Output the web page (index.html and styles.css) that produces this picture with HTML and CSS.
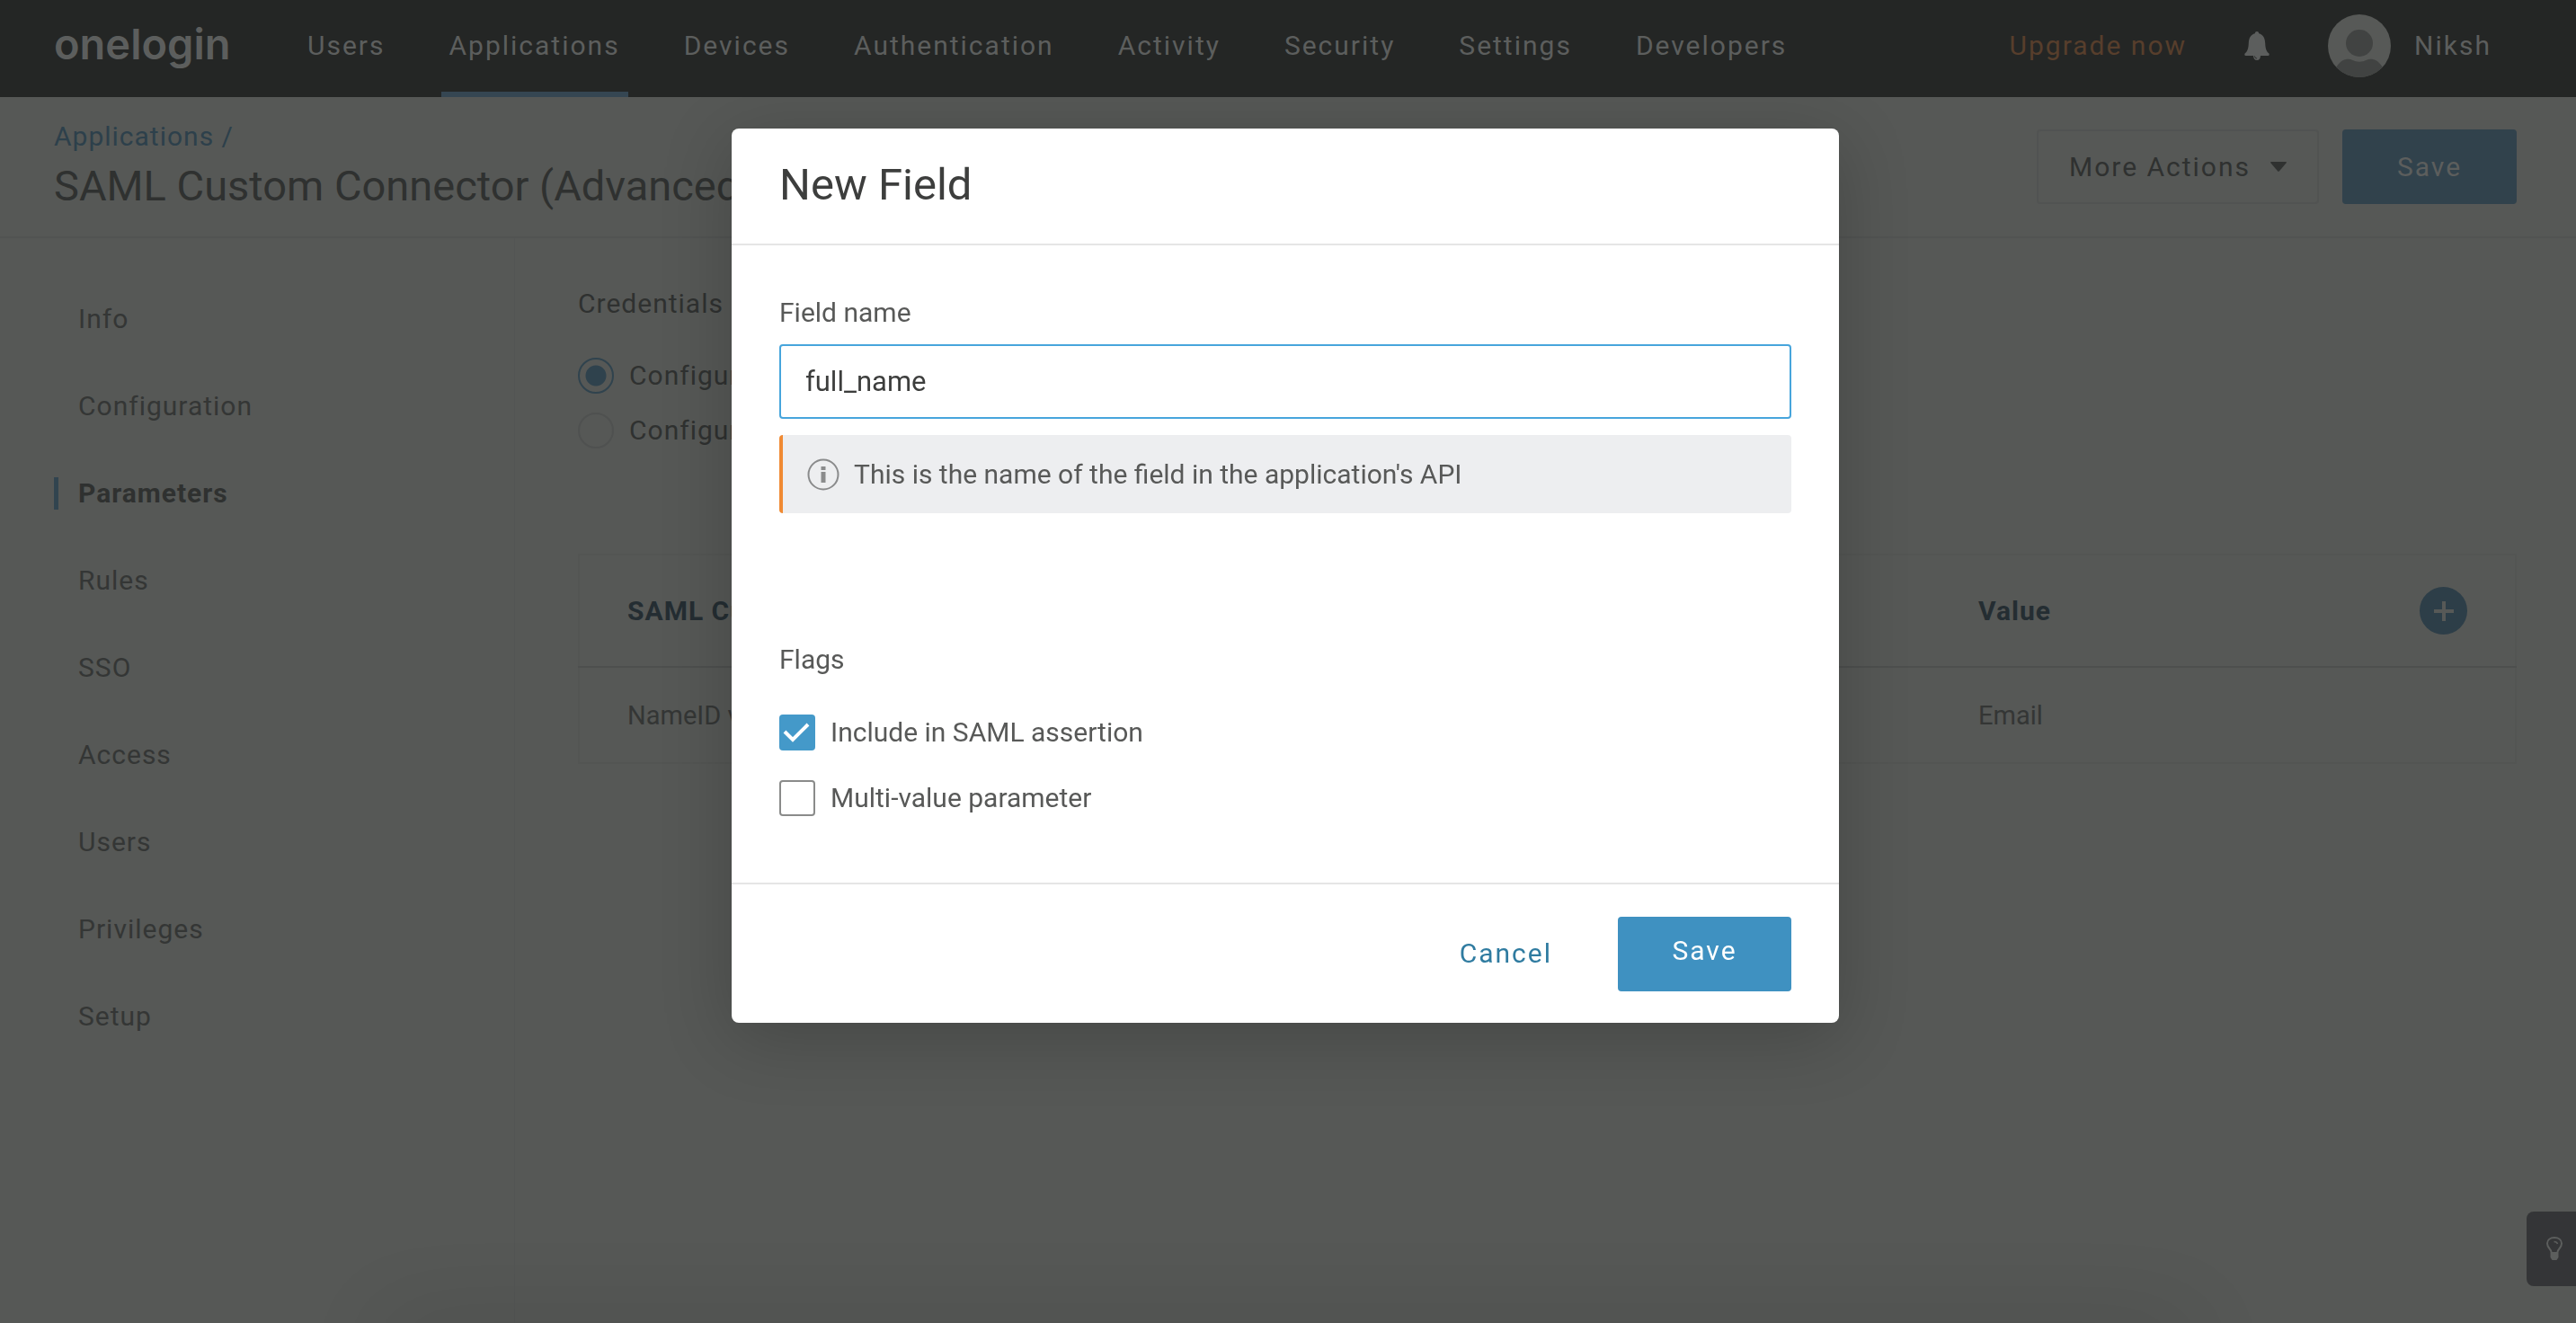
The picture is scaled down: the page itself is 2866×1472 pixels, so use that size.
FILE: index.html
```
<!DOCTYPE html>
<html lang="en">
<head>
<meta charset="utf-8">
<title>SAML Custom Connector (Advanced) | OneLogin</title>
<link rel="stylesheet" href="styles.css">
</head>
<body>
<header class="topbar">
  <a class="logo" href="#">onelogin</a>
  <nav class="mainnav" aria-label="Main">
    <a href="#">Users</a>
    <a class="active" href="#">Applications</a>
    <a href="#">Devices</a>
    <a href="#">Authentication</a>
    <a href="#">Activity</a>
    <a href="#">Security</a>
    <a href="#">Settings</a>
    <a href="#">Developers</a>
  </nav>
  <div class="account">
    <a class="upgrade" href="#">Upgrade now</a>
    <button class="bell" type="button" aria-label="Notifications">
      <svg width="30" height="34" viewBox="0 0 30 34"><path d="M15 1c1.300 0 2 .8 2.200 2.200C22 4.500 24 8.500 24.200 14c.2 6 1.300 9 4 11.300.8.7.7 2.700-.6 2.700H2.400c-1.300 0-1.400-2-.6-2.700 2.700-2.300 3.800-5.300 4-11.300C6 8.500 8 4.500 12.800 3.200 13 1.800 13.700 1 15 1z" fill="currentColor"/><path d="M11 28h8c0 3-1.600 5-4 5s-4-2-4-5z" fill="currentColor"/><path d="M12.500 28.500c.2 1.500 1 2.300 2.300 2.500" fill="none" stroke="#242625" stroke-width="1"/></svg>
    </button>
    <a class="profile" href="#">
      <svg width="70" height="70" viewBox="0 0 70 70"><defs><clipPath id="face"><circle cx="35" cy="35" r="35"/></clipPath></defs><circle cx="35" cy="35" r="35" fill="#575957"/><g clip-path="url(#face)" fill="#414342"><circle cx="35" cy="32" r="15"/><path d="M8 61c3-6 7-10 12-11 3-.7 5-.4 7 .8 5 2.600 11 2.600 16 0 2-1.200 4-1.500 7-.8 5 1 9 5 12 11v12H8z"/></g></svg>
      <span>Niksh</span>
    </a>
  </div>
</header>

<section class="pagehead">
  <div>
    <a class="crumb" href="#">Applications /</a>
    <h1>SAML Custom Connector (Advanced)</h1>
  </div>
  <div class="actions">
    <button class="btn outline" type="button">More Actions
      <svg width="18" height="11" viewBox="0 0 18 11"><path d="M1 0h16q1.500 0 .5 1.400L10 10.200q-1 1-2 0L.5 1.400Q-.5 0 1 0z" fill="currentColor"/></svg>
    </button>
    <button class="btn primary" type="button">Save</button>
  </div>
</section>

<div class="layout">
  <nav class="sidenav" aria-label="Application">
    <a href="#">Info</a>
    <a href="#">Configuration</a>
    <a class="active" href="#">Parameters</a>
    <a href="#">Rules</a>
    <a href="#">SSO</a>
    <a href="#">Access</a>
    <a href="#">Users</a>
    <a href="#">Privileges</a>
    <a href="#">Setup</a>
  </nav>
  <main class="content">
    <fieldset class="credentials">
      <legend>Credentials are</legend>
      <label><input type="radio" name="cred" checked>Configured by admin</label>
      <label><input type="radio" name="cred">Configured by admins and shared by all users</label>
    </fieldset>
    <table class="params">
      <thead>
        <tr><th class="name">SAML Custom Connector (Advanced) Field</th><th>Value</th><th class="add"><button type="button" aria-label="Add parameter"><svg width="22" height="22" viewBox="0 0 22 22"><path d="M11 0v22M0 11h22" stroke="currentColor" stroke-width="4"/></svg></button></th></tr>
      </thead>
      <tbody>
        <tr><td>NameID value</td><td>Email</td><td></td></tr>
      </tbody>
    </table>
  </main>
</div>

<div class="tray"></div>
<button class="hint" type="button" aria-label="Tips">
  <svg width="18" height="27" viewBox="0 0 18 27"><path d="M5.500 17c0-3-4.500-4.500-4.500-9.500C1 3.500 4.500 1 9 1s8 2.500 8 6.500c0 5-4.500 6.500-4.500 9.500" fill="none" stroke="currentColor" stroke-width="2"/><path d="M8.500 5.500c2 0 3.500.8 4 2.500" fill="none" stroke="currentColor" stroke-width="1.500"/><path d="M4.500 17h9v6l-2 3h-5l-2-3z" fill="currentColor"/></svg>
</button>

<div class="overlay">
  <form class="modal" role="dialog" aria-labelledby="dialog-title">
    <h2 id="dialog-title">New Field</h2>
    <div class="modal-body">
      <label class="caption" for="field-name">Field name</label>
      <input class="textbox" id="field-name" type="text" value="full_name">
      <p class="note">
        <svg width="36" height="36" viewBox="0 0 36 36"><circle cx="18" cy="18" r="16.500" fill="none" stroke="currentColor" stroke-width="2"/><path d="M15.500 9h5v4h-5zM15.500 15h5v12h-5z" fill="currentColor"/></svg>
        This is the name of the field in the application's API
      </p>
      <fieldset class="flags">
        <legend class="caption">Flags</legend>
        <label><span class="tick"><input type="checkbox" checked><svg viewBox="0 0 40 40"><path d="M6 19l9 9 17-17" fill="none" stroke="#fff" stroke-width="4"/></svg></span>Include in SAML assertion</label>
        <label><span class="tick"><input type="checkbox"></span>Multi-value parameter</label>
      </fieldset>
    </div>
    <div class="modal-foot">
      <button class="cancel" type="button">Cancel</button>
      <button class="btn save" type="button">Save</button>
    </div>
  </form>
</div>
</body>
</html>
```
FILE: styles.css
```
* { box-sizing: border-box; }
body {
  margin: 0;
  min-height: 100vh;
  display: flex;
  flex-direction: column;
  background: #565856;
  color: #343635;
  font: 30px/40px Roboto, "Liberation Sans", sans-serif;
}
a { color: inherit; text-decoration: none; }
button { font: inherit; color: inherit; border: 0; padding: 0; background: none; }
svg { display: block; }
fieldset { border: 0; margin: 0; padding: 0; min-width: 0; }
legend { padding: 0; }

.topbar {
  display: flex;
  align-items: stretch;
  height: 108px;
  padding: 0 94px 0 60px;
  background: #242625;
  color: #5c5e5d;
  letter-spacing: 2px;
}
.logo {
  width: 273px;
  font: 600 47px/98px Inter, sans-serif;
  letter-spacing: normal;
}
.mainnav { display: flex; gap: 53px; }
.mainnav a { padding: 0 9px; line-height: 102px; border-bottom: 6px solid transparent; }
.mainnav .active { border-color: #354652; }
.account { display: flex; align-items: center; margin-left: auto; padding-bottom: 6px; }
.upgrade { color: #573e2c; margin-right: 63px; }
.bell { margin-right: 64px; }
.profile { display: flex; align-items: center; gap: 26px; }

.pagehead {
  display: flex;
  justify-content: space-between;
  align-items: flex-start;
  height: 157px;
  padding: 24px 66px 0 60px;
  border-bottom: 2px solid #515352;
}
.crumb { display: block; line-height: 40px; color: #2d404b; letter-spacing: 1px; }
h1 { margin: 5px 0 0; font-size: 47px; line-height: 60px; font-weight: 400; color: #2f3130; }
.actions { display: flex; gap: 26px; padding-top: 12px; }
.btn {
  display: flex;
  align-items: center;
  justify-content: center;
  height: 83px;
  width: 194px;
  border-radius: 4px;
  letter-spacing: 2px;
}
.outline { width: 314px; gap: 22px; border: 2px solid #515352; color: #2f3130; }
.primary { background: #31424c; color: #5c5e5d; }

.layout { display: flex; flex: 1; letter-spacing: 1px; }
.sidenav {
  display: flex;
  flex-direction: column;
  gap: 61px;
  width: 573px;
  padding: 72px 0 0 60px;
  border-right: 1px solid #535554;
}
.sidenav a { line-height: 36px; padding-left: 22px; border-left: 5px solid transparent; }
.sidenav .active { font-weight: 700; border-color: #31444f; color: #2f3130; }
.content { flex: 1; padding: 53px 66px 0 70px; }
.credentials { display: flex; flex-direction: column; gap: 21px; color: #2f3130; }
.credentials legend { margin-bottom: 40px; }
.credentials label { display: flex; align-items: center; gap: 17px; }
.credentials input {
  appearance: none;
  width: 40px;
  height: 40px;
  margin: 0;
  border: 2px solid #4f5150;
  border-radius: 50%;
}
.credentials input:checked {
  border-color: #30434e;
  background: radial-gradient(circle, #2f424d 11px, transparent 12px);
}
.params {
  width: 100%;
  margin-top: 117px;
  border-collapse: collapse;
  border: 2px solid #535553;
  table-layout: fixed;
}
.params th, .params td { padding: 0 53px; text-align: left; }
.params th { height: 125px; color: #242d32; border-bottom: 2px solid #4d4f4e; }
.params td { height: 107px; font-size: 29px; letter-spacing: normal; }
.params .name { width: 1504px; }
.params .add { width: 160px; }
.add button {
  display: grid;
  place-items: center;
  width: 53px;
  height: 53px;
  border-radius: 50%;
  background: #2d3e48;
  color: #575957;
}

.tray {
  position: fixed;
  left: 15%;
  right: 15%;
  bottom: -60px;
  height: 60px;
  box-shadow: 0 0 100px rgba(0, 0, 0, .12);
}
.hint {
  position: fixed;
  right: 0;
  bottom: 41px;
  display: grid;
  place-items: center;
  width: 55px;
  height: 83px;
  padding-left: 6px;
  border-radius: 8px 0 0 8px;
  background: #343537;
  color: #5c5e5d;
}

.overlay {
  position: fixed;
  inset: 108px 0 0;
  display: flex;
  justify-content: center;
  align-items: flex-start;
  overflow: hidden;
  padding: 35px 6px 0 0;
}
.modal {
  width: 1232px;
  border-radius: 8px;
  background: #fff;
  color: #585958;
  box-shadow: 0 16px 80px rgba(0, 0, 0, .2);
}
.modal h2 {
  margin: 0;
  padding: 33px 53px 35px;
  border-bottom: 2px solid #e5e5e5;
  color: #3d3e3d;
  font-size: 49px;
  line-height: 60px;
  font-weight: 400;
}
.modal-body { padding: 55px 53px 74px; }
.caption { display: block; line-height: 40px; }
.textbox {
  display: block;
  width: 100%;
  height: 83px;
  margin: 15px 0 18px;
  padding: 0 27px;
  border: 2px solid #47a5dc;
  border-radius: 4px;
  outline: 0;
  font: inherit;
  font-size: 31px;
  color: #3d3e3d;
}
.note {
  display: flex;
  align-items: center;
  gap: 16px;
  height: 87px;
  margin: 0 0 143px;
  padding-left: 27px;
  border-left: 4px solid #f08a33;
  border-radius: 4px;
  background: #edeef0;
}
.note svg { color: #8a8b8c; }
.flags { display: flex; flex-direction: column; gap: 33px; }
.flags legend { margin-bottom: 41px; }
.flags label { display: flex; align-items: center; gap: 17px; }
.tick { display: grid; width: 40px; height: 40px; }
.tick > * { grid-area: 1 / 1; width: 40px; height: 40px; }
.tick input { appearance: none; margin: 0; border: 2px solid #8a8b8a; border-radius: 4px; }
.tick input:checked { border: 0; background: #4499c9; }
.modal-foot {
  display: flex;
  justify-content: flex-end;
  align-items: center;
  gap: 73px;
  height: 156px;
  padding: 0 53px;
  border-top: 2px solid #e5e5e5;
}
.cancel { color: #2f7ba0; letter-spacing: 2px; }
.save { width: 193px; background: #3f91c1; color: #fff; padding-bottom: 6px; }
```
